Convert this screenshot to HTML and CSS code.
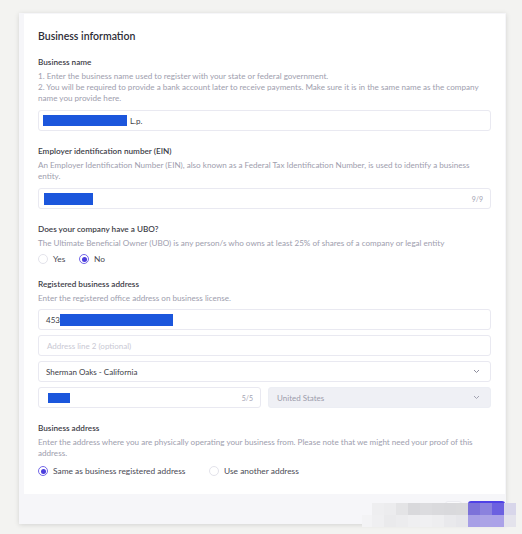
FILE: index.html
```html
<!DOCTYPE html>
<html>
<head>
<meta charset="utf-8">
<link rel="stylesheet" href="styles.css">
</head>
<body>
<div class="card">
  <div class="panel">
    <h1 class="title">Business information</h1>

    <section class="field">
      <div class="label">Business name</div>
      <div class="help">1. Enter the business name used to register with your state or federal government.<br>2. You will be required to provide a bank account later to receive payments. Make sure it is in the same name as the company name you provide here.</div>
      <div class="input"><span class="redact r-name"></span><span class="val">L.p.</span></div>
    </section>

    <section class="field">
      <div class="label">Employer identification number (EIN)</div>
      <div class="help">An Employer Identification Number (EIN), also known as a Federal Tax Identification Number, is used to identify a business entity.</div>
      <div class="input"><span class="redact r-ein"></span><span class="count">9/9</span></div>
    </section>

    <section class="field">
      <div class="label">Does your company have a UBO?</div>
      <div class="help">The Ultimate Beneficial Owner (UBO) is any person/s who owns at least 25% of shares of a company or legal entity</div>
      <div class="radios ubo">
        <label class="radio"><span class="dot"></span>Yes</label>
        <label class="radio"><span class="dot on"></span>No</label>
      </div>
    </section>

    <section class="field">
      <div class="label">Registered business address</div>
      <div class="help">Enter the registered office address on business license.</div>
      <div class="stack">
        <div class="input"><span class="val">453</span><span class="redact r-addr"></span></div>
        <div class="input"><span class="ph">Address line 2 (optional)</span></div>
        <div class="input select"><span class="val">Sherman Oaks - California</span><svg class="chev" width="7" height="5" viewBox="0 0 7 5"><path d="M1 1l2.5 2.5L6 1" fill="none" stroke="#8d8d9c" stroke-width="1"/></svg></div>
        <div class="row">
          <div class="input"><span class="redact r-zip"></span><span class="count">5/5</span></div>
          <div class="input select disabled"><span class="muted">United States</span><svg class="chev" width="7" height="5" viewBox="0 0 7 5"><path d="M1 1l2.5 2.5L6 1" fill="none" stroke="#a3a3b2" stroke-width="1"/></svg></div>
        </div>
      </div>
    </section>

    <section class="field">
      <div class="label">Business address</div>
      <div class="help">Enter the address where you are physically operating your business from. Please note that we might need your proof of this address.</div>
      <div class="radios addr">
        <label class="radio"><span class="dot on"></span>Same as business registered address</label>
        <label class="radio"><span class="dot"></span>Use another address</label>
      </div>
    </section>
  </div>
  <div class="footer">
    <span class="btn-back"></span>
    <span class="btn-next"></span>
  </div>
</div>
<div class="mosaic">
  <div class="mrow top">
    <i style="background:#eeeef0"></i><i style="background:#ececee"></i><i style="background:#e4e4e6"></i><i style="background:#d9d9dc"></i><i style="background:#dcdcdf"></i><i style="background:#dadadd"></i><i style="background:#d9d9dc"></i><i style="background:#dadadc"></i><i style="background:#7c72d9"></i><i style="background:#8b82de"></i><i style="background:#6c60e0"></i><i style="background:#d8d6ea"></i>
  </div>
  <div class="mrow bottom">
    <i style="background:#f3f3f5;width:10px"></i><i style="background:#efeff1"></i><i style="background:#eaeaec"></i><i style="background:#ececee"></i><i style="background:#efeff1"></i><i style="background:#f0f0f2"></i><i style="background:#eeeef0"></i><i style="background:#e9e9ec"></i><i style="background:#e6e6ea"></i><i style="background:#a79fe6"></i><i style="background:#aba3e6"></i><i style="background:#aba2e8"></i><i style="background:#e4e3ec"></i>
  </div>
</div>
</body>
</html>
```
FILE: styles.css
```css
* { box-sizing: border-box; }
html, body { margin: 0; padding: 0; }
body {
  background: #f3f3f1;
  font-family: "Lato", "Liberation Sans", sans-serif;
  width: 522px;
  height: 534px;
  overflow: hidden;
  position: relative;
  padding-top: 13px;
}
.card {
  margin-left: 19px;
  width: 487px;
  background: #f6f6f9;
  padding: 1px 1px 0 5px;
  box-shadow: 0 1px 5px rgba(0,0,0,0.13);
}
.panel {
  background: #fff;
  padding: 15px 14px 18px 14px;
}
.title {
  margin: 0;
  font-size: 10.5px;
  line-height: 14px;
  font-weight: 600;
  color: #2d2d36;
}
.field { margin-top: 15px; }
.field:first-of-type { margin-top: 14px; }
.label {
  font-size: 8.2px;
  line-height: 11px;
  font-weight: 600;
  color: #3d3d48;
}
.help {
  margin-top: 3px;
  font-size: 8.1px;
  line-height: 11px;
  color: #9e9eae;
}
.field > .input { margin-top: 6px; }
.stack { margin-top: 5px; }
.input {
  height: 21px;
  border: 1px solid #e9e9f1;
  border-radius: 3px;
  background: #fff;
  display: flex;
  align-items: center;
  padding: 0 7px 0 4px;
  font-size: 8px;
  color: #3c3c46;
}
.stack { display: flex; flex-direction: column; gap: 5px; }
.row { display: grid; grid-template-columns: 1fr 1fr; gap: 7px; }
.redact { display: inline-block; background: #1b56dc; height: 11px; }
.r-name { width: 84px; }
.r-ein { width: 49px; margin-left: 1px; height: 12px; }
.r-addr { width: 113px; height: 12px; }
.r-zip { width: 22px; height: 10px; margin-left: 5px; }
.val { margin-left: 3px; }
.ph { margin-left: 4px; color: #c9c9d4; }
.muted { margin-left: 4px; color: #9c9cab; }
.count { margin-left: auto; color: #a3a3b2; font-size: 7px; }
.select .chev { margin-left: auto; margin-right: 3px; }
.disabled { background: #eff0f5; border-color: #eceef4; }
.radios { display: flex; align-items: center; font-size: 8.4px; color: #4a4a55; }
.ubo { margin-top: 5px; }
.ubo .radio:first-child { width: 41px; }
.addr { margin-top: 7px; }
.addr .radio:first-child { width: 171px; }
.radio { display: flex; align-items: center; height: 10px; }
.dot {
  width: 10px; height: 10px;
  border-radius: 50%;
  border: 1px solid #e3e3eb;
  margin-right: 5px;
  display: inline-flex;
  align-items: center;
  justify-content: center;
  flex: none;
}
.dot.on { border-color: #7468e8; }
.dot.on::after {
  content: "";
  width: 5px; height: 5px;
  border-radius: 50%;
  background: #4b3edd;
}
.footer {
  height: 30px;
  display: flex;
  justify-content: flex-end;
  align-items: flex-start;
  padding-top: 7px;
}
.btn-back {
  width: 17px; height: 16px;
  border-radius: 3px;
  background: #fafafc;
  border: 1px solid #ececf1;
  margin-right: 6px;
}
.btn-next {
  width: 37px; height: 16px;
  border-radius: 3px;
  background: #4f41e6;
}
.mosaic {
  position: absolute;
  left: 362px;
  top: 503px;
}
.mrow { display: flex; }
.mrow.top { margin-left: 10px; height: 12px; }
.mrow.bottom { height: 12px; }
.mrow i { display: block; width: 12px; height: 100%; }
```
